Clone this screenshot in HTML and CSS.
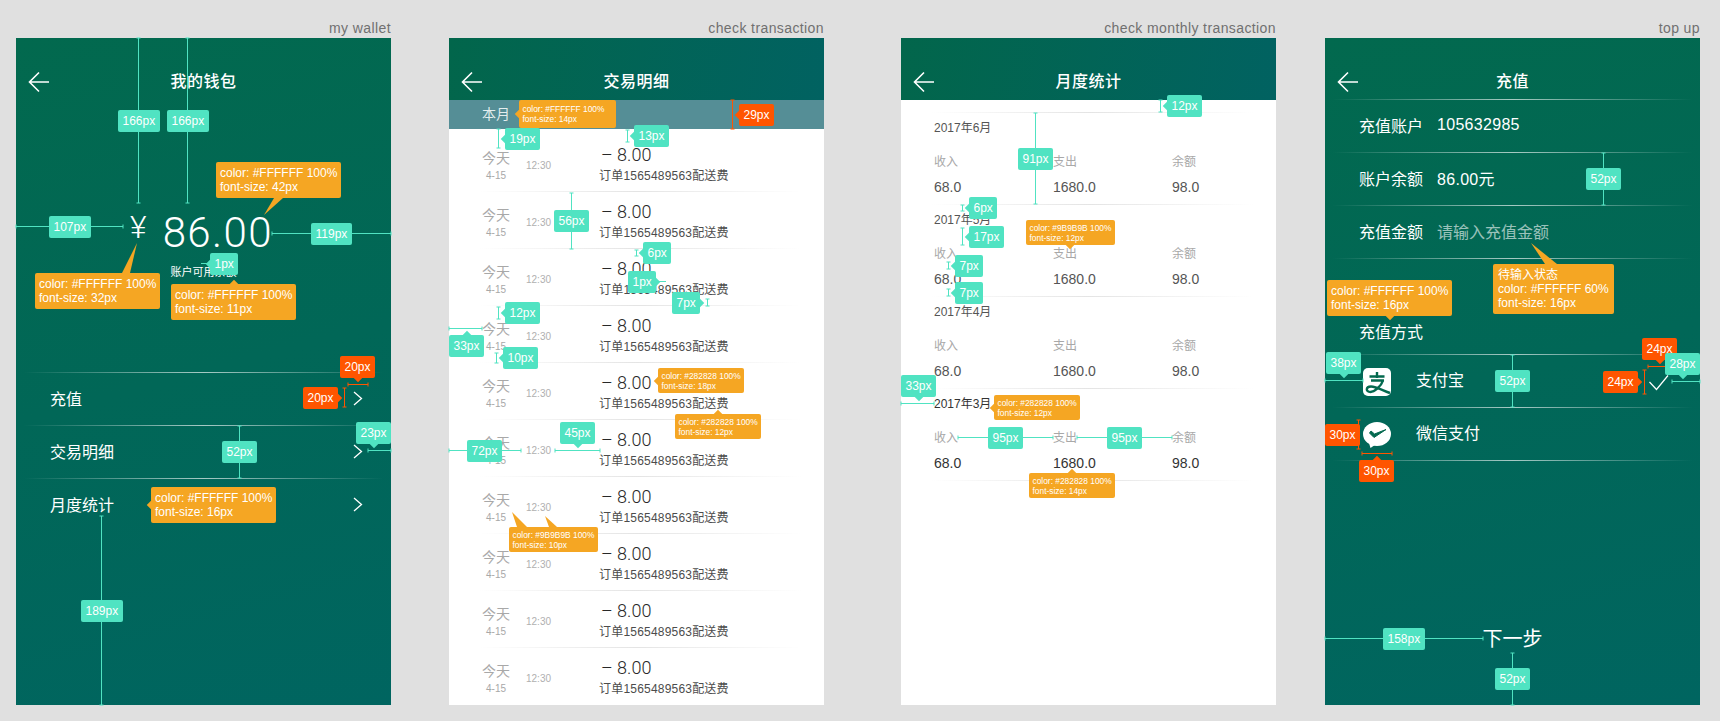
FILE: index.html
```html
<!DOCTYPE html>
<html lang="zh-CN">
<head>
    <meta charset="UTF-8">
    <meta name="viewport" content="width=device-width, initial-scale=1.0">
    <title>Wallet spec</title>
    <link rel="stylesheet" href="styles.css">
</head>
<body>
    <div class="board">
        <!-- my wallet -->
        <section class="col">
            <div class="col-name">my wallet</div>
            <div class="screen green">
                <div class="topbar">
                    <svg class="back" width="22" height="22" viewBox="0 0 22 22"><path d="M21 11H1.500M11 1.500 1.500 11 11 20.500"/></svg>
                    <h1 class="title">我的钱包</h1>
                </div>
                <div class="balance">
                    <div class="amount"><span class="yen">¥</span><span class="money">86.00</span></div>
                    <div class="balance-label">账户可用余额</div>
                </div>
                <ul class="menu">
                    <li class="menu-row rule-w">充值<svg class="chev" width="10" height="15" viewBox="0 0 10 15"><path d="M1 1l7.500 6.500L1 14"/></svg></li>
                    <li class="menu-row rule-w">交易明细<svg class="chev" width="10" height="15" viewBox="0 0 10 15"><path d="M1 1l7.500 6.500L1 14"/></svg></li>
                    <li class="menu-row">月度统计<svg class="chev" width="10" height="15" viewBox="0 0 10 15"><path d="M1 1l7.500 6.500L1 14"/></svg></li>
                </ul>
            </div>
        </section>

        <!-- check transaction -->
        <section class="col col-check">
            <div class="col-name">check transaction</div>
            <div class="screen white">
                <div class="topbar green-bar">
                    <svg class="back" width="22" height="22" viewBox="0 0 22 22"><path d="M21 11H1.500M11 1.500 1.500 11 11 20.500"/></svg>
                    <h1 class="title">交易明细</h1>
                </div>
                <div class="month-bar">本月</div>
                <ul class="txn-list">
                    <li class="txn rule-g"><div class="txn-day"><div class="today">今天</div><div class="date">4-15</div></div><div class="txn-time">12:30</div><div class="txn-info"><div class="txn-amount">– 8.00</div><div class="txn-memo">订单1565489563配送费</div></div></li>
                    <li class="txn rule-g"><div class="txn-day"><div class="today">今天</div><div class="date">4-15</div></div><div class="txn-time">12:30</div><div class="txn-info"><div class="txn-amount">– 8.00</div><div class="txn-memo">订单1565489563配送费</div></div></li>
                    <li class="txn rule-g"><div class="txn-day"><div class="today">今天</div><div class="date">4-15</div></div><div class="txn-time">12:30</div><div class="txn-info"><div class="txn-amount">– 8.00</div><div class="txn-memo">订单1565489563配送费</div></div></li>
                    <li class="txn rule-g"><div class="txn-day"><div class="today">今天</div><div class="date">4-15</div></div><div class="txn-time">12:30</div><div class="txn-info"><div class="txn-amount">– 8.00</div><div class="txn-memo">订单1565489563配送费</div></div></li>
                    <li class="txn rule-g"><div class="txn-day"><div class="today">今天</div><div class="date">4-15</div></div><div class="txn-time">12:30</div><div class="txn-info"><div class="txn-amount">– 8.00</div><div class="txn-memo">订单1565489563配送费</div></div></li>
                    <li class="txn rule-g"><div class="txn-day"><div class="today">今天</div><div class="date">4-15</div></div><div class="txn-time">12:30</div><div class="txn-info"><div class="txn-amount">– 8.00</div><div class="txn-memo">订单1565489563配送费</div></div></li>
                    <li class="txn rule-g"><div class="txn-day"><div class="today">今天</div><div class="date">4-15</div></div><div class="txn-time">12:30</div><div class="txn-info"><div class="txn-amount">– 8.00</div><div class="txn-memo">订单1565489563配送费</div></div></li>
                    <li class="txn rule-g"><div class="txn-day"><div class="today">今天</div><div class="date">4-15</div></div><div class="txn-time">12:30</div><div class="txn-info"><div class="txn-amount">– 8.00</div><div class="txn-memo">订单1565489563配送费</div></div></li>
                    <li class="txn rule-g"><div class="txn-day"><div class="today">今天</div><div class="date">4-15</div></div><div class="txn-time">12:30</div><div class="txn-info"><div class="txn-amount">– 8.00</div><div class="txn-memo">订单1565489563配送费</div></div></li>
                    <li class="txn"><div class="txn-day"><div class="today">今天</div><div class="date">4-15</div></div><div class="txn-time">12:30</div><div class="txn-info"><div class="txn-amount">– 8.00</div><div class="txn-memo">订单1565489563配送费</div></div></li>
                </ul>
            </div>
        </section>

        <!-- check monthly transaction -->
        <section class="col col-monthly">
            <div class="col-name">check monthly transaction</div>
            <div class="screen white">
                <div class="topbar green-bar">
                    <svg class="back" width="22" height="22" viewBox="0 0 22 22"><path d="M21 11H1.500M11 1.500 1.500 11 11 20.500"/></svg>
                    <h1 class="title">月度统计</h1>
                </div>
                <div class="stats">
                    <div class="stat rule-g">
                        <div class="stat-month">2017年6月</div>
                        <div class="stat-grid">
                            <span class="stat-key">收入</span><span class="stat-key">支出</span><span class="stat-key">余额</span>
                            <span class="stat-val">68.0</span><span class="stat-val">1680.0</span><span class="stat-val">98.0</span>
                        </div>
                    </div>
                    <div class="stat rule-g">
                        <div class="stat-month">2017年5月</div>
                        <div class="stat-grid">
                            <span class="stat-key">收入</span><span class="stat-key">支出</span><span class="stat-key">余额</span>
                            <span class="stat-val">68.0</span><span class="stat-val">1680.0</span><span class="stat-val">98.0</span>
                        </div>
                    </div>
                    <div class="stat rule-g">
                        <div class="stat-month">2017年4月</div>
                        <div class="stat-grid">
                            <span class="stat-key">收入</span><span class="stat-key">支出</span><span class="stat-key">余额</span>
                            <span class="stat-val">68.0</span><span class="stat-val">1680.0</span><span class="stat-val">98.0</span>
                        </div>
                    </div>
                    <div class="stat rule-g stat-dark">
                        <div class="stat-month">2017年3月</div>
                        <div class="stat-grid">
                            <span class="stat-key">收入</span><span class="stat-key">支出</span><span class="stat-key">余额</span>
                            <span class="stat-val">68.0</span><span class="stat-val">1680.0</span><span class="stat-val">98.0</span>
                        </div>
                    </div>
                </div>
            </div>
        </section>

        <!-- top up -->
        <section class="col col-topup">
            <div class="col-name">top up</div>
            <div class="screen green">
                <div class="topbar rule-w">
                    <svg class="back" width="22" height="22" viewBox="0 0 22 22"><path d="M21 11H1.500M11 1.500 1.500 11 11 20.500"/></svg>
                    <h1 class="title">充值</h1>
                </div>
                <div class="field rule-w"><span class="field-key">充值账户</span><span class="field-val">105632985</span></div>
                <div class="field rule-w"><span class="field-key">账户余额</span><span class="field-val">86.00元</span></div>
                <div class="field rule-w"><span class="field-key">充值金额</span><span class="placeholder">请输入充值金额</span></div>
                <div class="pay-title rule-w">充值方式</div>
                <div class="pay-row rule-w">
                    <svg class="pay-icon" width="30" height="30" viewBox="0 0 30 30">
                        <rect x="1" y="1" width="28" height="28" rx="5" fill="#fff"/>
                        <path d="M15 5v6M7.500 9.500h15M9 13.500h13M21 13.500C19 20 12 25 8.500 25 3.500 25 3.500 19.500 9 19.500 14 19.500 21 23.500 28 26" fill="none" stroke="#04694f" stroke-width="2.400"/>
                    </svg>
                    <span class="pay-name">支付宝</span>
                    <svg class="check" width="24" height="24" viewBox="0 0 24 24"><path d="M1.500 12l7 7.500L20 5.500"/></svg>
                </div>
                <div class="pay-row rule-w">
                    <svg class="pay-icon" width="30" height="30" viewBox="0 0 30 30">
                        <ellipse cx="15" cy="14" rx="14" ry="12" fill="#fff"/>
                        <path d="M7 23l1.500 5 5-3.500z" fill="#fff"/>
                        <path d="M7.500 13l4.500 4.500L24 9.500 12.500 14 9 11z" fill="#04694f" stroke="#04694f"/>
                    </svg>
                    <span class="pay-name">微信支付</span>
                </div>
                <div class="next">下一步</div>
            </div>
        </section>

        <!-- spec marks lying over the screens -->
        <div class="notes">
            <svg class="marks" width="1720" height="721" viewBox="0 0 1720 721">
                <g class="mark-teal">
                    <path d="M138.500 38V203M136.500 38h4M136.500 203h4"/>
                    <path d="M187.500 38V203M185.500 38h4M185.500 203h4"/>
                    <path d="M239.500 426V478M237.500 426h4M237.500 478h4"/>
                    <path d="M101.500 516V705M99.500 516h4M99.500 705h4"/>
                    <path d="M16 226.500H123M16 224.500v4M123 224.500v4"/>
                    <path d="M272 233.500H391M272 231.500v4M391 231.500v4"/>
                    <path d="M368 450.500H391M368 448.500v4M391 448.500v4"/>
                    <path d="M201 263.500H210"/>

                    <path d="M498.500 129V148M496.500 129h4M496.500 148h4"/>
                    <path d="M627.500 130V142M625.500 130h4M625.500 142h4"/>
                    <path d="M571.500 193V249M569.500 193h4M569.500 249h4"/>
                    <path d="M636.500 250V256M634.500 250h4M634.500 256h4"/>
                    <path d="M707.500 299V306M705.500 299h4M705.500 306h4"/>
                    <path d="M498.500 307V319M496.500 307h4M496.500 319h4"/>
                    <path d="M496.500 353V363M494.500 353h4M494.500 363h4"/>
                    <path d="M449 328.500H482M449 326.500v4M482 326.500v4"/>
                    <path d="M555 450.500H600M555 448.500v4M600 448.500v4"/>
                    <path d="M449 450.500H521M449 448.500v4M521 448.500v4"/>
                    <path d="M657 281.500H666"/>

                    <path d="M1160.500 100V112M1158.500 100h4M1158.500 112h4"/>
                    <path d="M1035.500 113V204M1033.500 113h4M1033.500 204h4"/>
                    <path d="M962.500 205V211M960.500 205h4M960.500 211h4"/>
                    <path d="M962.500 228V245M960.500 228h4M960.500 245h4"/>
                    <path d="M948.500 262V269M946.500 262h4M946.500 269h4"/>
                    <path d="M948.500 289V296M946.500 289h4M946.500 296h4"/>
                    <path d="M901 403.500H934M901 401.500v4M934 401.500v4"/>
                    <path d="M958 437.500H1053M958 435.500v4M1053 435.500v4"/>
                    <path d="M1077 437.500H1172M1077 435.500v4M1172 435.500v4"/>

                    <path d="M1603.500 153V205M1601.500 153h4M1601.500 205h4"/>
                    <path d="M1512.500 355V407M1510.500 355h4M1510.500 407h4"/>
                    <path d="M1512.500 653V705M1510.500 653h4M1510.500 705h4"/>
                    <path d="M1325 380.500H1363M1325 378.500v4M1363 378.500v4"/>
                    <path d="M1672 381.500H1700M1672 379.500v4M1700 379.500v4"/>
                    <path d="M1325 638.500H1483M1325 636.500v4M1483 636.500v4"/>
                </g>
                <g class="mark-red">
                    <path d="M348 384.500H368M348 382.500v4M368 382.500v4"/>
                    <path d="M344.500 388V407M342.500 388h4M342.500 407h4"/>
                    <path d="M732.500 100V129M730.500 100h4M730.500 129h4"/>
                    <path d="M1648 366.500H1672M1648 364.500v4M1672 364.500v4"/>
                    <path d="M1644.500 370V394M1642.500 370h4M1642.500 394h4"/>
                    <path d="M1358.500 420V449M1356.500 420h4M1356.500 449h4"/>
                    <path d="M1362 453.500H1392M1362 451.500v4M1392 451.500v4"/>
                </g>
                <g class="mark-tail">
                    <path d="M264 215l10-17h9z"/>
                    <path d="M137 243l-15 30h8z"/>
                    <path d="M1531 243l14 21h12z"/>
                    <path d="M512 512l5 15h10z"/>
                    <path d="M545 516l4 11h8z"/>
                </g>
            </svg>

            <span class="chip teal w1">166px</span>
            <span class="chip teal w2">166px</span>
            <span class="chip teal w3">107px</span>
            <span class="chip teal w4">119px</span>
            <span class="chip teal tip-l w5">1px</span>
            <span class="chip red tip-b w6">20px</span>
            <span class="chip red tip-r w7">20px</span>
            <span class="chip teal tip-b w8">23px</span>
            <span class="chip teal w9">52px</span>
            <span class="chip teal w10">189px</span>
            <div class="spec w11">color: #FFFFFF 100%<br>font-size: 42px</div>
            <div class="spec w12">color: #FFFFFF 100%<br>font-size: 32px</div>
            <div class="spec tip-t w13">color: #FFFFFF 100%<br>font-size: 11px</div>
            <div class="spec tip-l w14">color: #FFFFFF 100%<br>font-size: 16px</div>

            <div class="spec spec-sm tip-l t1">color: #FFFFFF 100%<br>font-size: 14px</div>
            <span class="chip red tip-l t2">29px</span>
            <span class="chip teal tip-l t3">19px</span>
            <span class="chip teal tip-l t4">13px</span>
            <span class="chip teal t5">56px</span>
            <span class="chip teal tip-l t6">6px</span>
            <span class="chip teal tip-r t7">1px</span>
            <span class="chip teal tip-r t8">7px</span>
            <span class="chip teal tip-l t9">12px</span>
            <span class="chip teal tip-t t10">33px</span>
            <span class="chip teal tip-l t11">10px</span>
            <div class="spec spec-sm tip-l t12">color: #282828 100%<br>font-size: 18px</div>
            <div class="spec spec-sm tip-t t13">color: #282828 100%<br>font-size: 12px</div>
            <span class="chip teal tip-b t14">45px</span>
            <span class="chip teal t15">72px</span>
            <div class="spec spec-sm t16">color: #9B9B9B 100%<br>font-size: 10px</div>

            <span class="chip teal tip-l m1">12px</span>
            <span class="chip teal m2">91px</span>
            <span class="chip teal tip-l m3">6px</span>
            <span class="chip teal tip-l m4">17px</span>
            <span class="chip teal tip-l m5">7px</span>
            <span class="chip teal tip-l m6">7px</span>
            <div class="spec spec-sm tip-b m7">color: #9B9B9B 100%<br>font-size: 12px</div>
            <span class="chip teal tip-b m8">33px</span>
            <div class="spec spec-sm tip-l m9">color: #282828 100%<br>font-size: 12px</div>
            <span class="chip teal m10">95px</span>
            <span class="chip teal m11">95px</span>
            <div class="spec spec-sm tip-t m12">color: #282828 100%<br>font-size: 14px</div>

            <span class="chip teal u1">52px</span>
            <div class="spec u2">待输入状态<br>color: #FFFFFF 60%<br>font-size: 16px</div>
            <div class="spec tip-b u3">color: #FFFFFF 100%<br>font-size: 16px</div>
            <span class="chip teal tip-b u4">38px</span>
            <span class="chip red tip-b u5">24px</span>
            <span class="chip teal tip-b u6">28px</span>
            <span class="chip red tip-r u7">24px</span>
            <span class="chip teal u8">52px</span>
            <span class="chip red u9">30px</span>
            <span class="chip red tip-t u10">30px</span>
            <span class="chip teal u11">158px</span>
            <span class="chip teal u12">52px</span>
        </div>
    </div>
</body>
</html>
```

FILE: styles.css
```css
* {
    box-sizing: border-box;
    font-family: "Liberation Sans", "Noto Sans CJK SC", sans-serif;
}

body {
    margin: 0;
    background-color: #E0E0E0;
}

ul {
    list-style: none;
    margin: 0;
    padding: 0;
}

.board {
    position: relative;
    display: flex;
    height: 721px;
    padding-left: 16px;
    overflow: hidden;
}

.col {
    width: 375px;
}

.col-check {
    margin-left: 58px;
}

.col-monthly {
    margin-left: 77px;
}

.col-topup {
    margin-left: 49px;
}

.col-name {
    height: 38px;
    padding-top: 19px;
    line-height: 18px;
    font-size: 14px;
    letter-spacing: .4px;
    text-align: right;
    color: #707070;
}

.screen {
    display: flex;
    flex-direction: column;
    height: 667px;
}

.green {
    background: linear-gradient(165deg, #02694e 0%, #006560 100%);
    color: #fff;
}

.white {
    background-color: #fff;
}

/* thin fading lines under the rows */
.rule-w {
    background: linear-gradient(90deg, transparent 2%, rgba(255, 255, 255, .65) 50%, transparent 98%) bottom / 100% 1px no-repeat;
}

.rule-g {
    background: linear-gradient(90deg, transparent 8%, #e4e4e4 50%, transparent 94%) bottom / 100% 1px no-repeat;
}

.topbar {
    display: grid;
    grid-template-columns: 1fr auto 1fr;
    align-items: center;
    flex-shrink: 0;
    height: 62px;
    padding: 26px 12px 0;
}

.green-bar {
    background: linear-gradient(100deg, #02664b 0%, #016261 100%);
}

.back {
    display: block;
}

.back path {
    fill: none;
    stroke: #fff;
    stroke-width: 1.6;
}

.title {
    margin: 0;
    height: 36px;
    line-height: 36px;
    font-size: 16px;
    font-weight: 500;
    letter-spacing: .5px;
    color: #fff;
}

/* wallet */
.balance {
    height: 272px;
    padding-top: 108px;
    text-align: center;
}

.amount {
    display: flex;
    justify-content: center;
    align-items: flex-start;
    height: 56px;
    padding-right: 4px;
}

.yen {
    margin-right: 16px;
    line-height: 38px;
    font-size: 32px;
    font-family: Roboto, sans-serif;
    font-weight: 300;
}

.money {
    line-height: 50px;
    font-size: 42px;
    font-family: Roboto, sans-serif;
    font-weight: 300;
    letter-spacing: 1.400px;
}

.balance-label {
    line-height: 16px;
    font-size: 11px;
}

.menu {
    background: linear-gradient(90deg, transparent 2%, rgba(255, 255, 255, .65) 50%, transparent 98%) top / 100% 1px no-repeat;
    padding-top: 1px;
}

.menu-row {
    display: flex;
    justify-content: space-between;
    align-items: center;
    height: 53px;
    padding: 0 28px 3px 34px;
    font-size: 16px;
}

.chev path {
    fill: none;
    stroke: #fff;
    stroke-width: 1.3;
}

/* transactions */
.month-bar {
    height: 29px;
    padding-left: 33px;
    line-height: 29px;
    font-size: 14px;
    color: rgba(255, 255, 255, .85);
    background-color: #558E96;
}

.txn-list {
    margin-top: 6px;
}

.txn {
    display: flex;
    height: 57px;
    padding-left: 33px;
}

.txn-day {
    width: 44px;
    padding-top: 14px;
    text-align: center;
    padding-right: 16px;
}

.today {
    line-height: 18px;
    font-size: 14px;
    white-space: nowrap;
    color: #a8a8a8;
}

.date {
    line-height: 17px;
    font-size: 10px;
    color: #a8a8a8;
}

.txn-time {
    width: 73px;
    padding-top: 24px;
    line-height: 14px;
    font-size: 10px;
    color: #b0b0b0;
}

.txn-info {
    padding-top: 9px;
}

.txn-amount {
    line-height: 22px;
    font-size: 18px;
    font-family: Roboto, sans-serif;
    font-weight: 300;
    color: #282828;
    padding-left: 2px;
}

.txn-memo {
    line-height: 21px;
    font-size: 12px;
    letter-spacing: .2px;
    color: #4c4c4c;
}

/* monthly */
.stats {
    margin-top: 12px;
    background: linear-gradient(90deg, transparent 8%, #e4e4e4 50%, transparent 94%) top / 100% 1px no-repeat;
    padding-top: 1px;
}

.stat {
    height: 92px;
    padding: 6px 0 0 33px;
}

.stat-month {
    line-height: 18px;
    font-size: 12px;
    color: #555;
}

.stat-grid {
    display: grid;
    grid-template-columns: 119px 119px 1fr;
    row-gap: 6px;
    margin-top: 16px;
}

.stat-key {
    line-height: 18px;
    font-size: 12px;
    color: #a8a8a8;
}

.stat-val {
    line-height: 20px;
    font-size: 14px;
    color: #555;
}

.stat-dark .stat-month,
.stat-dark .stat-val {
    color: #333;
}

/* top up */
.field {
    display: flex;
    align-items: center;
    flex-shrink: 0;
    height: 53px;
    padding: 0 0 3px 34px;
    font-size: 16px;
}

.field-key {
    width: 78px;
}

.field-val {
    letter-spacing: .3px;
}

.placeholder {
    opacity: .6;
}

.pay-title {
    flex-shrink: 0;
    height: 96px;
    padding: 52px 0 0 34px;
    line-height: 43px;
    font-size: 16px;
}

.pay-row {
    display: flex;
    align-items: center;
    flex-shrink: 0;
    height: 53px;
    padding: 0 28px 0 37px;
    font-size: 16px;
}

.pay-name {
    margin: 0 0 5px 24px;
    flex-grow: 1;
}

.check path {
    fill: none;
    stroke: #fff;
    stroke-width: 1.2;
}

.next {
    margin-top: auto;
    margin-bottom: 52px;
    line-height: 28px;
    font-size: 20px;
    text-align: center;
}

/* spec notes */
.notes {
    position: absolute;
    top: 0;
    left: 0;
    width: 1720px;
    height: 721px;
}

.marks {
    position: absolute;
    top: 0;
    left: 0;
}

.marks path {
    fill: none;
    stroke-width: 1;
}

.mark-teal path {
    stroke: #50E3C2;
}

.mark-red path {
    stroke: #FF5500;
}

.mark-tail path {
    fill: #F5A623;
    stroke: none;
}

.chip {
    position: absolute;
    height: 22px;
    padding: 0 4.500px;
    line-height: 22px;
    font-size: 12px;
    color: #fff;
    white-space: nowrap;
    border-radius: 2px;
}

.teal {
    background-color: #50E3C2;
}

.red {
    background-color: #FF5500;
}

.spec {
    position: absolute;
    padding: 4px;
    line-height: 14px;
    font-size: 12px;
    color: #fff;
    white-space: nowrap;
    background-color: #F5A623;
    border-radius: 2px;
}

.spec-sm {
    padding: 2.500px 3.500px;
    line-height: 10px;
    font-size: 8.400px;
}

/* little diamonds on the edge of a note */
.tip-l::after,
.tip-r::after,
.tip-t::after,
.tip-b::after {
    content: "";
    position: absolute;
    width: 6px;
    height: 6px;
    background: inherit;
    transform: rotate(45deg);
}

.tip-l::after {
    left: -3px;
    top: calc(50% - 3px);
}

.tip-r::after {
    right: -3px;
    top: calc(50% - 3px);
}

.tip-t::after {
    top: -3px;
    left: calc(50% - 3px);
}

.tip-b::after {
    bottom: -3px;
    left: calc(50% - 3px);
}

.w1 { left: 118px; top: 110px; }
.w2 { left: 167px; top: 110px; }
.w3 { left: 49px; top: 216px; }
.w4 { left: 311px; top: 223px; }
.w5 { left: 210px; top: 253px; }
.w6 { left: 340px; top: 356px; }
.w7 { left: 303px; top: 387px; }
.w8 { left: 356px; top: 422px; }
.w9 { left: 222px; top: 441px; }
.w10 { left: 81px; top: 600px; }
.w11 { left: 216px; top: 162px; }
.w12 { left: 35px; top: 273px; }
.w13 { left: 171px; top: 284px; }
.w14 { left: 151px; top: 487px; }

.t1 { left: 519px; top: 100px; width: 97px; height: 28px; padding-top: 4px; }
.t2 { left: 739px; top: 104px; }
.t3 { left: 505px; top: 128px; }
.t4 { left: 634px; top: 125px; }
.t5 { left: 554px; top: 210px; }
.t6 { left: 643px; top: 242px; }
.t7 { left: 628px; top: 271px; }
.t8 { left: 672px; top: 292px; }
.t9 { left: 505px; top: 302px; }
.t10 { left: 449px; top: 335px; }
.t11 { left: 503px; top: 347px; }
.t12 { left: 658px; top: 368px; }
.t13 { left: 675px; top: 414px; }
.t14 { left: 560px; top: 422px; }
.t15 { left: 467px; top: 440px; }
.t16 { left: 509px; top: 527px; }

.m1 { left: 1167px; top: 95px; }
.m2 { left: 1018px; top: 148px; }
.m3 { left: 969px; top: 197px; }
.m4 { left: 969px; top: 226px; }
.m5 { left: 955px; top: 255px; }
.m6 { left: 955px; top: 282px; }
.m7 { left: 1026px; top: 220px; }
.m8 { left: 901px; top: 375px; }
.m9 { left: 994px; top: 395px; }
.m10 { left: 988px; top: 427px; }
.m11 { left: 1107px; top: 427px; }
.m12 { left: 1029px; top: 473px; }

.u1 { left: 1586px; top: 168px; }
.u2 { left: 1493px; top: 264px; padding: 4px 5px; }
.u3 { left: 1327px; top: 280px; }
.u4 { left: 1326px; top: 352px; }
.u5 { left: 1642px; top: 338px; }
.u6 { left: 1665px; top: 353px; }
.u7 { left: 1603px; top: 371px; }
.u8 { left: 1495px; top: 370px; }
.u9 { left: 1325px; top: 424px; }
.u10 { left: 1359px; top: 460px; }
.u11 { left: 1383px; top: 628px; }
.u12 { left: 1495px; top: 668px; }
```
